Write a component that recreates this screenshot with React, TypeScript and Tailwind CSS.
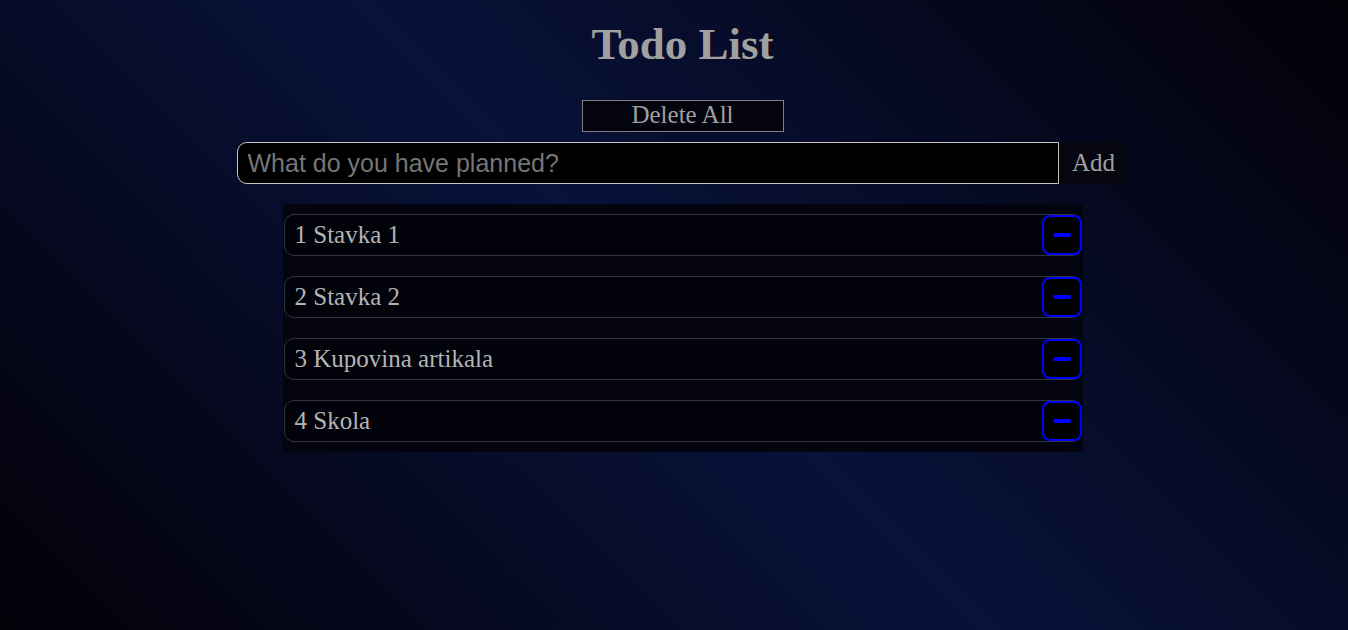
import React from "react";

const items = ["Stavka 1", "Stavka 2", "Kupovina artikala", "Skola"];

export default function App() {
  return (
    <div className="min-h-screen w-full bg-[linear-gradient(45deg,#030008,#08123a,#030008)] pl-[17px] flex flex-col items-center font-['Liberation_Serif',serif]">
      <h1 className="mt-[19px] text-[45px] leading-[50px] font-bold text-[#a0a0a0]">Todo List</h1>
      <button className="mt-[31px] w-[202px] h-[32px] border border-[#808080] bg-[#03040e] pb-[3px] text-[25px] leading-none text-[#a0a0a0]">
        Delete All
      </button>
      <div className="mt-[10px] flex w-[892px] h-[42px]">
        <input
          autoFocus
          placeholder="What do you have planned?"
          className="flex-1 min-w-0 h-full rounded-l-[10px] border border-[#c4c4c4] bg-black px-[10px] text-[25px] font-['Liberation_Sans',sans-serif] text-[#a0a0a0] caret-[#d0d0d0] placeholder:text-[#757575] outline-none"
        />
        <button className="w-[70px] h-full rounded-r-[10px] bg-[#05060f] text-[25px] text-[#a0a0a0]">Add</button>
      </div>
      <ul className="mt-[20px] w-[800px] bg-[#03040d] px-px py-[10px] flex flex-col gap-[20px]">
        {items.map((t, i) => (
          <li
            key={i}
            className="h-[42px] rounded-[10px] border border-[#34343c] bg-[#02030a] flex items-center justify-between pl-[10px]"
          >
            <span className="pb-[2px] text-[25px] leading-none text-[#b4b4b4]">
              {i + 1} {t}
            </span>
            <button className="w-[40px] h-[40px] -mr-px rounded-[8px] border-2 border-[#0000ff] bg-black flex items-center justify-center">
              <span className="block w-[18px] h-[4px] rounded-full bg-[#0000ff]" />
            </button>
          </li>
        ))}
      </ul>
    </div>
  );
}
